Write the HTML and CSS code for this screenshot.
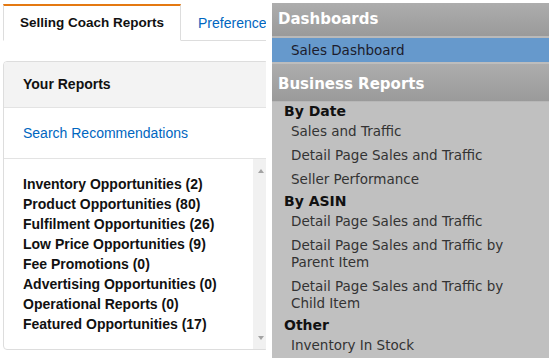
FILE: index.html
```html
<!DOCTYPE html>
<html lang="en">
<head>
<meta charset="utf-8">
<title>Reports</title>
<link rel="stylesheet" href="styles.css">
</head>
<body>
<div class="page">
  <section class="coach">
    <div class="coach-inner">
      <nav class="tabs">
        <div class="tab active">Selling Coach Reports</div>
        <div class="tab link">Preferences</div>
      </nav>
      <div class="card">
        <div class="card-head">Your Reports</div>
        <div class="card-sec"><a class="link">Search Recommendations</a></div>
        <div class="card-scroll">
          <ul class="opps">
            <li>Inventory Opportunities (2)</li>
            <li>Product Opportunities (80)</li>
            <li>Fulfilment Opportunities (26)</li>
            <li>Low Price Opportunities (9)</li>
            <li>Fee Promotions (0)</li>
            <li>Advertising Opportunities (0)</li>
            <li>Operational Reports (0)</li>
            <li>Featured Opportunities (17)</li>
          </ul>
          <div class="sbar"><span class="tri up"></span><span class="tri down"></span></div>
        </div>
      </div>
    </div>
  </section>
  <aside class="reports">
    <div class="rhead first">Dashboards</div>
    <div class="rrow active">Sales Dashboard</div>
    <div class="rhead second">Business Reports</div>
    <div class="rlist">
      <div class="rsub">By Date</div>
      <div class="ritem">Sales and Traffic</div>
      <div class="ritem">Detail Page Sales and Traffic</div>
      <div class="ritem">Seller Performance</div>
      <div class="rsub">By ASIN</div>
      <div class="ritem">Detail Page Sales and Traffic</div>
      <div class="ritem">Detail Page Sales and Traffic by<br>Parent Item</div>
      <div class="ritem">Detail Page Sales and Traffic by<br>Child Item</div>
      <div class="rsub">Other</div>
      <div class="ritem">Inventory In Stock</div>
    </div>
  </aside>
</div>
</body>
</html>
```
FILE: styles.css
```css
html, body {
  margin: 0;
  padding: 0;
  background: #fff;
}
.page {
  display: flex;
  align-items: flex-start;
  width: 549px;
  height: 363px;
  overflow: hidden;
}
.coach {
  width: 266px;
  flex: none;
  overflow: hidden;
  font-family: "Liberation Sans", Arial, sans-serif;
  font-size: 14px;
  color: #111;
}
.coach-inner {
  width: 420px;
  padding: 4px 0 0 3px;
}
.tabs {
  display: flex;
  border-bottom: 1px solid #dddddd;
  height: 36px;
}
.tab {
  padding: 0 16px;
  line-height: 34px;
  white-space: nowrap;
}
.tab.active {
  font-weight: bold;
  font-size: 13.5px;
  border-top: 2px solid #e47911;
  border-left: 1px solid #dddddd;
  border-right: 1px solid #dddddd;
  border-bottom: 1px solid #fff;
  background: #fff;
  height: 34px;
}
.tab.link {
  padding-left: 17px;
  padding-top: 2px;
}
.link {
  color: #0066c0;
}
.card {
  margin-top: 20px;
  width: 266px;
  box-sizing: border-box;
  border: 1px solid #dddddd;
  border-radius: 4px;
  overflow: hidden;
}
.card-head {
  background: #f3f3f3;
  font-weight: bold;
  height: 45px;
  line-height: 45px;
  padding-left: 19px;
  border-bottom: 1px solid #e3e3e3;
}
.card-sec {
  height: 50px;
  line-height: 50px;
  padding-left: 19px;
  border-bottom: 1px solid #e3e3e3;
}
.card-scroll {
  display: flex;
  height: 190px;
}
.opps {
  flex: 1;
  list-style: none;
  margin: 0;
  padding: 15px 0 15px 19px;
  font-weight: bold;
  line-height: 20px;
  white-space: nowrap;
}
.sbar {
  width: 15px;
  flex: none;
  background: #f1f1f1;
  display: flex;
  flex-direction: column;
  justify-content: space-between;
  align-items: center;
  padding: 10px 0 9px;
  box-sizing: border-box;
}
.tri {
  width: 0;
  height: 0;
  border-left: 3.5px solid transparent;
  border-right: 3.5px solid transparent;
}
.tri.up {
  border-bottom: 4px solid #a3a3a3;
}
.tri.down {
  border-top: 4px solid #a3a3a3;
}
.reports {
  margin-left: 6px;
  margin-top: 3px;
  width: 277px;
  flex: none;
  background: #c0c0c0;
  font-family: "DejaVu Sans", Verdana, sans-serif;
  color: #2a2a2a;
}
.rhead {
  background: linear-gradient(#adadad, #9a9a9a);
  color: #fff;
  font-weight: bold;
  font-size: 15px;
  padding-left: 6px;
}
.rhead.first {
  height: 33px;
  line-height: 32px;
}
.rhead.second {
  height: 37px;
  line-height: 40px;
  border-top: 2px solid #bdbdbd;
  border-bottom: 1px solid #b7b7b7;
}
.rrow {
  border-top: 2px solid #b9b9b9;
  height: 24px;
  line-height: 24px;
  background: #6699cc;
  font-size: 13.5px;
  padding-left: 19px;
  color: #1c1c2c;
}
.rlist {
  display: flex;
  flex-direction: column;
}
.rsub {
  font-weight: bold;
  font-size: 14px;
  line-height: 18px;
  padding-left: 12px;
  color: #111;
}
.ritem {
  font-size: 13.5px;
  line-height: 17px;
  padding: 3px 0 4px 19px;
  color: #333;
}
```
